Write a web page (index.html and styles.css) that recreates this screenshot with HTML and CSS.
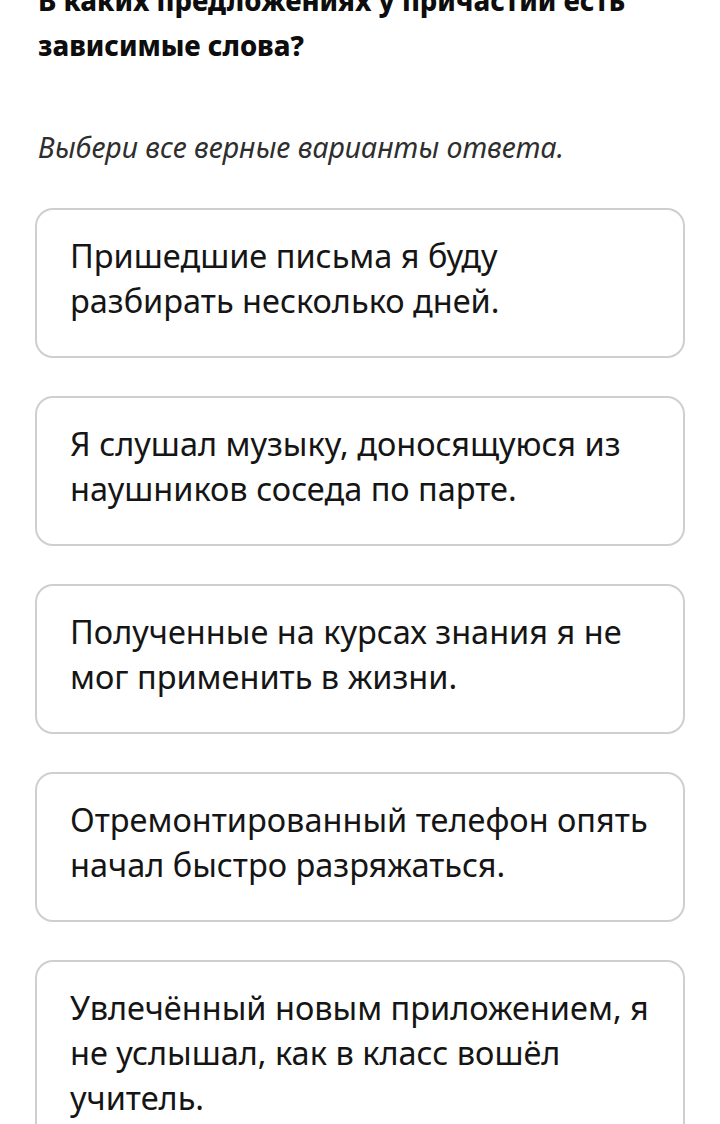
FILE: index.html
```html
<!DOCTYPE html>
<html lang="ru">
<head>
<meta charset="utf-8">
<link rel="stylesheet" href="styles.css">
</head>
<body>
<main class="quiz">
  <h1 class="question">В каких предложениях у причастий есть зависимые слова?</h1>
  <p class="hint">Выбери все верные варианты ответа.</p>
  <ul class="options">
    <li class="option">Пришедшие письма я буду разбирать несколько дней.</li>
    <li class="option">Я слушал музыку, доносящуюся из наушников соседа по парте.</li>
    <li class="option">Полученные на курсах знания я не мог применить в жизни.</li>
    <li class="option">Отремонтированный телефон опять начал быстро разряжаться.</li>
    <li class="option">Увлечённый новым приложением, я не услышал, как в класс вошёл учитель.</li>
  </ul>
</main>
</body>
</html>
```

FILE: styles.css
```css
html, body {
  margin: 0;
  padding: 0;
  background: #ffffff;
}
body {
  font-family: "Noto Sans", "Open Sans", sans-serif;
  color: #1a1a1a;
  overflow: hidden;
}
.quiz {
  padding: 0 35px;
}
.question {
  margin: -22px 0 0 3px;
  font-size: 27.5px;
  font-weight: 800;
  line-height: 45px;
  width: 630px;
  color: #0d0d0d;
}
.hint {
  margin: 62px 0 0 3px;
  font-size: 28.5px;
  font-style: italic;
  line-height: 34px;
  color: #2e2e2e;
}
.options {
  list-style: none;
  margin: 44px 0 0 0;
  padding: 0;
  display: flex;
  flex-direction: column;
  gap: 38px;
}
.option {
  box-sizing: border-box;
  min-height: 150px;
  border: 2px solid #cfcfcf;
  border-radius: 18px;
  padding: 23px 22px 33px 33px;
  font-size: 32.5px;
  line-height: 45px;
  color: #151515;
}
```
